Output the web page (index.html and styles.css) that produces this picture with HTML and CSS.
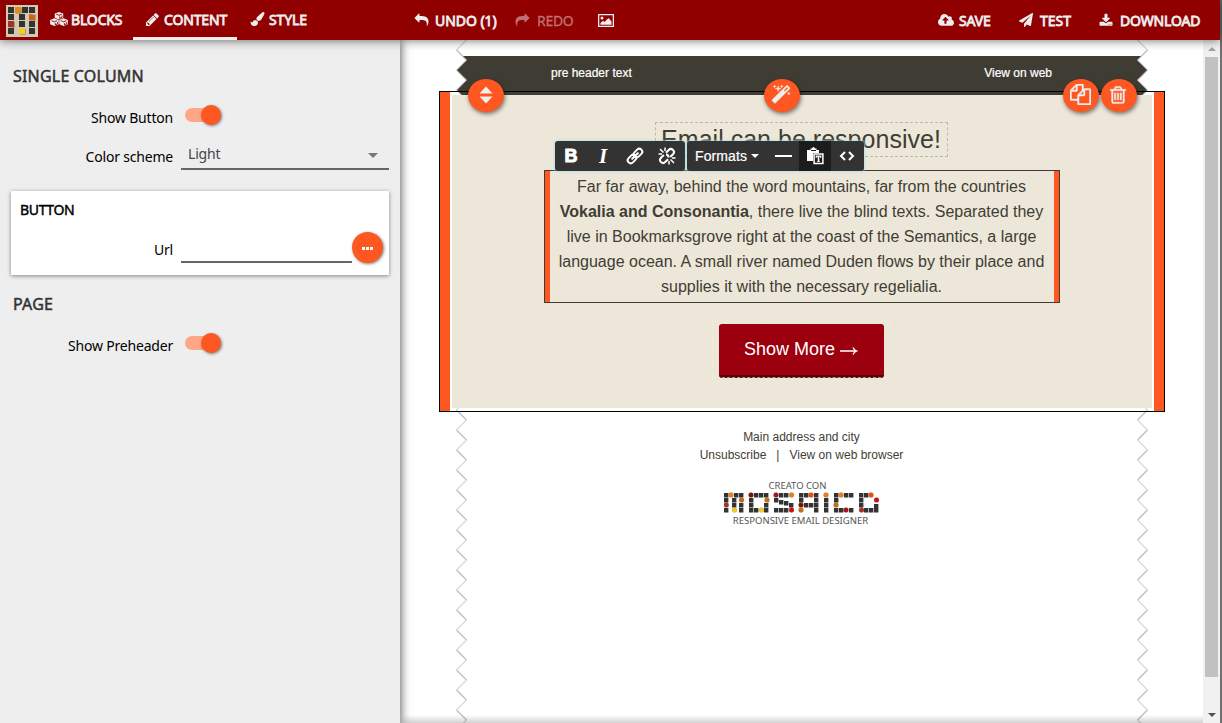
FILE: index.html
```html
<!DOCTYPE html>
<html lang="en">
<head>
<meta charset="utf-8">
<title>Mosaico editor</title>
<link rel="stylesheet" href="styles.css">
</head>
<body>
<div class="app">
  <header class="topbar">
    <svg class="logo" viewBox="0 0 32 32">
      <rect width="32" height="32" fill="#d2c9b0"/>
      <path fill="#333" d="M2 2h6v6H2zM16 2h6v6h-6zM23 2h6v6h-6zM2 9h6v6H2zM13 9h6v6h-6zM13 16h6v6h-6zM23 16h6v6h-6zM2 23h6v6H2zM23 23h6v6h-6z"/>
      <path fill="#a99f86" d="M10 3h6v6h-6zM24 10h6v6h-6zM3 17h6v6H3zM14 24h6v6h-6z"/>
      <path fill="#e08a17" d="M9 2l6 0 0 6-6 0z"/><path fill="#cf6413" d="M23 9l6 1 0 5-6 0z"/>
      <path fill="#a53126" d="M2 16h6v6H2z"/><path fill="#f2cf1f" d="M13 23h6v6h-6z"/>
    </svg>
    <nav class="tabs">
      <a class="tab tab-blocks"><svg class="ic cubes" viewBox="0 0 18 14"><g fill="#eee"><path d="M9 0l4.200 1.500v4.200L9 7.500 4.800 5.700V1.500zM4.400 6.200l4.300 1.700v4.300L4.400 14 .1 12.200V7.900zM13.600 6.200l4.300 1.700v4.300L13.600 14l-4.300-1.800V7.900z"/></g><path d="M6.200 2.200L9 3.300l2.800-1.100M9.700 4.500v1.900l2.300-1V3.600M1.600 8.700l2.800 1.100 2.800-1.100M5.200 11v1.900l2.300-1v-1.800M10.800 8.700l2.800 1.100 2.800-1.100M14.400 11v1.900l2.300-1v-1.800" fill="none" stroke="#900000" stroke-width=".9"/></svg><span>BLOCKS</span></a>
      <a class="tab tab-content active"><svg class="ic" viewBox="128 128 1536 1536"><path d="M491 1536l91-91-235-235-91 91v107h128v128h107zm523-928q0-22-22-22-10 0-17 7l-542 542q-7 7-7 17 0 22 22 22 10 0 17-7l542-542q7-7 7-17zm-54-192l416 416-832 832h-416v-416zm683 96q0 53-37 90l-166 166-416-416 166-165q36-38 90-38 53 0 91 38l235 234q37 39 37 91z"/></svg><span>CONTENT</span></a>
      <a class="tab tab-style"><svg class="ic brush" viewBox="0 0 1792 1792"><path d="M1615 0q70 0 122.500 46.500t52.500 116.500q0 63-45 151-332 629-465 752-97 91-218 91-126 0-216.500-92.500t-90.500-219.500q0-128 92-212l638-579q59-54 130-54zm-909 1034q39 76 106.500 130t150.500 76l1 71q4 213-129.500 347t-348.500 134q-123 0-218-46.500t-152.500-127.500-86.500-183-29-220q7 5 41 30t62 44.500 59 36.500 46 17q41 0 55-37 25-66 57.500-112.500t69.500-76 88-47.500 103-25.500 125-10.500z"/></svg><span>STYLE</span></a>
    </nav>
    <div class="history">
      <a class="act undo"><svg class="ic flip" viewBox="0 0 1792 1792"><path d="M1792 640q0 26-19 45l-512 512q-19 19-45 19t-45-19-19-45v-256h-224q-98 0-175.500 6t-154 21.500-133 42.500-105.500 69.500-80 101-48.500 138.500-17.500 181q0 55 5 123 0 6 2.500 23.500t2.500 26.500q0 15-8.500 25t-23.500 10q-16 0-28-17-7-9-13-22t-13.500-30-10.500-24q-127-285-127-451 0-199 53-333 162-403 875-403h224v-256q0-26 19-45t45-19 45 19l512 512q19 19 19 45z"/></svg><span>UNDO (1)</span></a>
      <a class="act redo"><svg class="ic" viewBox="0 0 1792 1792"><path d="M1792 640q0 26-19 45l-512 512q-19 19-45 19t-45-19-19-45v-256h-224q-98 0-175.500 6t-154 21.500-133 42.500-105.500 69.500-80 101-48.500 138.500-17.500 181q0 55 5 123 0 6 2.500 23.500t2.500 26.500q0 15-8.500 25t-23.500 10q-16 0-28-17-7-9-13-22t-13.500-30-10.500-24q-127-285-127-451 0-199 53-333 162-403 875-403h224v-256q0-26 19-45t45-19 45 19l512 512q19 19 19 45z"/></svg><span>REDO</span></a>
      <a class="act gallery"><svg class="ic pic" viewBox="0 0 16 13"><path fill-rule="evenodd" d="M0 0h16v13H0zM1.300 1.300v10.400h13.400V1.300z"/><circle cx="4" cy="4" r="1.500"/><path d="M2.500 10.800V9l2.500-2.300 1.500 1.300 4-4 3 3.500v3.300z"/></svg></a>
    </div>
    <div class="actions">
      <a class="act save"><svg class="ic cloud" viewBox="-64 128 1920 1536"><path d="M1216 864q0-14-9-23l-352-352q-9-9-23-9t-23 9l-351 351q-10 12-10 24 0 14 9 23t23 9h224v352q0 13 9.500 22.500t22.500 9.500h192q13 0 22.500-9.500t9.500-22.500v-352h224q13 0 22.500-9.500t9.500-22.500zm640 288q0 159-112.500 271.500t-271.500 112.500h-1088q-185 0-316.500-131.500t-131.500-316.500q0-130 70-240t188-165q-2-30-2-43 0-212 150-362t362-150q156 0 285.500 87t188.500 231q71-62 166-62 106 0 181 75t75 181q0 76-41 138 130 31 213.500 135.500t83.500 238.500z"/></svg><span>SAVE</span></a>
      <a class="act test"><svg class="ic" viewBox="0 0 1792 1792"><path d="M1764 11q33 24 27 64l-256 1536q-5 29-32 45-14 8-31 8-11 0-24-5l-453-185-242 295q-18 23-49 23-13 0-22-4-19-7-30.500-23.500t-11.500-36.500v-349l864-1059-1069 925-395-162q-37-14-40-55-2-40 32-59l1664-960q15-9 32-9 20 0 36 11z"/></svg><span>TEST</span></a>
      <a class="act download"><svg class="ic" viewBox="0 0 1792 1600"><path d="M1344 1344q0-26-19-45t-45-19-45 19-19 45 19 45 45 19 45-19 19-45zm256 0q0-26-19-45t-45-19-45 19-19 45 19 45 45 19 45-19 19-45zm128-224v320q0 40-28 68t-68 28h-1472q-40 0-68-28t-28-68v-320q0-40 28-68t68-28h465l135 136q58 56 136 56t136-56l136-136h464q40 0 68 28t28 68zm-325-569q17 41-14 70l-448 448q-18 19-45 19t-45-19l-448-448q-31-29-14-70 17-39 59-39h256v-448q0-26 19-45t45-19h256q26 0 45 19t19 45v448h256q42 0 59 39z"/></svg><span>DOWNLOAD</span></a>
    </div>
  </header>

  <div class="workspace">
    <aside class="sidebar">
      <h2 class="section">SINGLE COLUMN</h2>
      <div class="row row-toggle"><label class="label">Show Button</label><i class="toggle"></i></div>
      <div class="row row-select"><label class="label">Color scheme</label><div class="select"><span>Light</span><i class="caret"></i></div></div>
      <section class="card">
        <h3 class="card-title">BUTTON</h3>
        <div class="row row-url"><label class="label">Url</label><div class="input"></div><button class="more"><i></i><i></i><i></i></button></div>
      </section>
      <h2 class="section">PAGE</h2>
      <div class="row row-toggle"><label class="label">Show Preheader</label><i class="toggle"></i></div>
    </aside>

    <main class="stage">
      <svg class="zigzag" viewBox="0 0 692 683">
        <defs>
          <pattern id="zl" width="12" height="20" patternUnits="userSpaceOnUse" patternTransform="translate(0 10)"><path d="M.5 0L10.500 10" stroke="#c2c2c2" stroke-width="1.500"/><path d="M10.500 10L.5 20" stroke="#d8d8d8" stroke-width="1.200"/></pattern>
          <pattern id="zr" width="12" height="20" patternUnits="userSpaceOnUse" patternTransform="translate(680 10)"><path d="M11.500 0L1.500 10" stroke="#c2c2c2" stroke-width="1.500"/><path d="M1.500 10L11.500 20" stroke="#d8d8d8" stroke-width="1.200"/></pattern>
        </defs>
        <rect width="12" height="683" fill="url(#zl)"/>
        <rect x="680" width="12" height="683" fill="url(#zr)"/>
      </svg>
      <div class="preheader"><span>pre header text</span><span>View on web</span></div>
      <section class="module">
        <div class="block">
          <h1 class="headline">Email can be responsive!</h1>
          <div class="copy">Far far away, behind the word mountains, far from the countries<br><b>Vokalia and Consonantia</b>, there live the blind texts. Separated they<br>live in Bookmarksgrove right at the coast of the Semantics, a large<br>language ocean. A small river named Duden flows by their place and<br>supplies it with the necessary regelialia.</div>
          <div class="cta-wrap"><a class="cta">Show More <svg class="arrow" viewBox="0 0 18 10"><path d="M0 5h16.500M13 1.500q1 2.700 3.800 3.500-2.800.800-3.800 3.500" fill="none" stroke="#fff" stroke-width="1.300"/></svg></a></div>
        </div>
        <button class="fab fab-move"><svg viewBox="0 0 14 18"><path d="M7 .5l6.500 7H.5zM7 17.500l6.500-7H.5z"/></svg></button>
        <button class="fab fab-magic"><svg viewBox="0 0 1792 1792"><path d="M1254 581l293-293-107-107-293 293zm447-293q0 27-18 45l-1286 1286q-18 18-45 18t-45-18l-198-198q-18-18-18-45t18-45l1286-1286q18-18 45-18t45 18l198 198q18 18 18 45zm-1351-190l98 30-98 30-30 98-30-98-98-30 98-30 30-98zm350 162l196 60-196 60-60 196-60-196-196-60 196-60 60-196zm930 478l98 30-98 30-30 98-30-98-98-30 98-30 30-98zm-640-640l98 30-98 30-30 98-30-98-98-30 98-30 30-98z"/></svg></button>
        <button class="fab fab-copy"><svg viewBox="0 0 1792 1792"><path d="M1696 384q40 0 68 28t28 68v1216q0 40-28 68t-68 28h-960q-40 0-68-28t-28-68v-288h-544q-40 0-68-28t-28-68v-672q0-40 20-88t48-76l408-408q28-28 76-48t88-20h416q40 0 68 28t28 68v328q68-40 128-40h416zm-544 213l-299 299h299v-299zm-640-384l-299 299h299v-299zm196 647l316-316v-416h-384v416q0 40-28 68t-68 28h-416v640h512v-256q0-40 20-88t48-76zm956 804v-1152h-384v416q0 40-28 68t-68 28h-416v640h896z"/></svg></button>
        <button class="fab fab-trash"><svg viewBox="0 0 1792 1792"><path d="M704 736v576q0 14-9 23t-23 9h-64q-14 0-23-9t-9-23v-576q0-14 9-23t23-9h64q14 0 23 9t9 23zm256 0v576q0 14-9 23t-23 9h-64q-14 0-23-9t-9-23v-576q0-14 9-23t23-9h64q14 0 23 9t9 23zm256 0v576q0 14-9 23t-23 9h-64q-14 0-23-9t-9-23v-576q0-14 9-23t23-9h64q14 0 23 9t9 23zm128 724v-948h-896v948q0 22 7 40.500t14.500 27 10.500 8.500h832q3 0 10.500-8.500t14.500-27 7-40.500zm-672-1076h448l-48-117q-7-9-17-11h-317q-10 2-17 11zm928 32v64q0 14-9 23t-23 9h-96v948q0 83-47 143.500t-113 60.500h-832q-66 0-113-58.500t-47-141.500v-952h-96q-14 0-23-9t-9-23v-64q0-14 9-23t23-9h309l70-167q15-37 54-63t79-26h320q40 0 79 26t54 63l70 167h309q14 0 23 9t9 23z"/></svg></button>
        <div class="toolbar">
          <div class="group">
            <span class="tool bold">B</span><span class="tool italic">I</span>
            <span class="tool"><svg viewBox="0 0 18 18"><g fill="none" stroke="#fff" stroke-width="2" transform="rotate(-45 9 9)"><rect x="0" y="6" width="9.500" height="6" rx="3"/><rect x="8.500" y="6" width="9.500" height="6" rx="3"/><path d="M5 9h8" stroke-linecap="round"/></g></svg></span>
            <span class="tool"><svg viewBox="0 0 18 18"><g fill="none" stroke="#fff" stroke-width="2"><g transform="rotate(-45 9 9)"><path d="M7.500 6H3.500a3 3 0 0 0 0 6h4M10.500 6h4a3 3 0 0 1 0 6h-4"/></g><path stroke-width="1.500" d="M2 2l3.500 3.500M7 .500v3.500M.500 7h3.500M12.500 12.500L16 16M11 14v3.500M14 11h3.500"/><path d="M8 7.500q2.500 0 2.500 3"/></g></svg></span>
          </div>
          <div class="group">
            <span class="formats">Formats<i></i></span>
            <span class="tool"><i class="dash"></i></span>
            <span class="tool pressed"><svg viewBox="0 0 18 18"><path fill="#fff" fill-rule="evenodd" d="M1 3h3.500V1.500h1.500Q6.500 0 7.500 0T9 1.500h1.500V3H13v3H7v8H1zM5 3v1h5V3z"/><path fill="none" stroke="#fff" stroke-width="1.500" d="M8.100 7.100h8.800v9.300H8.100z"/><path fill="#fff" d="M9.700 8.500h5.600V11h-.8l-.4-1.200h-.8v4.400l.8.300v.6h-3.200v-.6l.8-.3V9.800h-.8L10.500 11h-.8z"/></svg></span>
            <span class="tool"><svg viewBox="0 0 18 18"><path d="M7 5L3 9l4 4M11 5l4 4-4 4" fill="none" stroke="#fff" stroke-width="2"/></svg></span>
          </div>
        </div>
      </section>
      <footer class="mail-footer">
        <p>Main address and city</p>
        <p class="links"><span>Unsubscribe</span><span>|</span><span>View on web browser</span></p>
        <div class="brand">
          <span class="brand-top">CREATO CON</span>
          <svg class="mosaic" viewBox="0 0 156 22">
            <path fill="#333" d="M0 1h4.400v4.400H0zM10 1h4.400v4.400H10zM15 1h4.400v4.400H15zM0 6h4.400v4.400H0zM8 6h4.400v4.400H8zM8 11h4.400v4.400H8zM15 11h4.400v4.400H15zM0 16h4.400v4.400H0zM15 16h4.400v4.400H15z
            M30 1h4.400v4.400H30zM35 1h4.400v4.400H35zM40 1h4.400v4.400H40zM25 6h4.400v4.400H25zM25 11h4.400v4.400H25zM40 11h4.400v4.400H40zM25 16h4.400v4.400H25zM40 16h4.400v4.400H40zM30 16h4.400v4.400H30z
            M55 1h4.400v4.400H55zM60 1h4.400v4.400H60zM50 6h4.400v4.400H50zM55 8h4.400v4.400H55zM60 9h4.400v4.400H60zM65 11h4.400v4.400H65zM50 16h4.400v4.400H50zM55 16h4.400v4.400H55zM60 16h4.400v4.400H60z
            M75 1h4.400v4.400H75zM80 1h4.400v4.400H80zM90 1h4.400v4.400H90zM75 6h4.400v4.400H75zM90 6h4.400v4.400H90zM80 11h4.400v4.400H80zM85 11h4.400v4.400H85zM90 11h4.400v4.400H90zM90 16h4.400v4.400H90z
            M100 6h4.400v4.400H100zM100 11h4.400v4.400H100zM100 16h4.400v4.400H100z
            M110 1h4.400v4.400H110zM120 1h4.400v4.400H120zM125 1h4.400v4.400H125zM110 6h4.400v4.400H110zM110 16h4.400v4.400H110zM115 16h4.400v4.400H115zM125 16h4.400v4.400H125z
            M135 1h4.400v4.400H135zM140 1h4.400v4.400H140zM135 6h4.400v4.400H135zM135 11h4.400v4.400H135zM150 12h4.400v4.400H150zM140 16h4.400v4.400H140zM145 16h4.400v4.400H145zM150 16h4.400v4.400H150z"/>
            <g stroke="#777" stroke-opacity=".35" stroke-width=".6"><circle cx="7" cy="3" r="2.500" fill="#df8518"/><circle cx="17.500" cy="8" r="2.500" fill="#cf6413"/><circle cx="2.300" cy="13" r="2.500" fill="#a53126"/><circle cx="10.500" cy="18" r="2.500" fill="#f2cf1f"/><circle cx="27" cy="3" r="2.500" fill="#7a1005"/><circle cx="43" cy="8" r="2.500" fill="#c17312"/><circle cx="37.500" cy="18" r="2.500" fill="#f2cf1f"/><circle cx="52" cy="3" r="2.500" fill="#a41020"/><circle cx="67.500" cy="3" r="2.500" fill="#df8518"/><circle cx="67.500" cy="18" r="2.500" fill="#d40e08"/><circle cx="87" cy="3" r="2.500" fill="#f24a0a"/><circle cx="77" cy="13" r="2.500" fill="#7a1005"/><circle cx="77" cy="18" r="2.500" fill="#c17312"/><circle cx="102" cy="3" r="2.500" fill="#df8518"/><circle cx="117" cy="3" r="2.500" fill="#df8518"/><circle cx="112" cy="13" r="2.500" fill="#c17312"/><circle cx="122" cy="18" r="2.500" fill="#a41020"/><circle cx="147" cy="3" r="2.500" fill="#f24a0a"/><circle cx="152.500" cy="8" r="2.500" fill="#d40e08"/><circle cx="137.500" cy="18" r="2.500" fill="#a53126"/></g>
          </svg>
          <span class="brand-bottom">RESPONSIVE EMAIL DESIGNER</span>
        </div>
      </footer>
    </main>
    <div class="scrollbar"><i class="up"></i><div class="thumb"></div><i class="down"></i></div>
  </div>
</div>
</body>
</html>
```

FILE: styles.css
```css
* { box-sizing: border-box; }
body { margin: 0; overflow: hidden; font-family: "Noto Sans", sans-serif; font-size: 14px; color: #000; }
h1, h2, h3, p { margin: 0; font-weight: 400; }
button { border: 0; padding: 0; }
.app { width: 1222px; height: 723px; display: flex; flex-direction: column; background: #fff; border-right: 2px solid #707070; }

/* top bar */
.topbar { position: relative; z-index: 5; flex: 0 0 40px; display: flex; background: #900000; color: #eee; box-shadow: 0 0 10px rgba(0,0,0,.6); }
.logo { width: 32px; height: 32px; margin: 5px 0 0 6px; }
.tabs, .history, .actions { display: flex; }
.tabs { width: 362px; }
.tab, .act { display: flex; align-items: center; white-space: nowrap; -webkit-text-stroke: .8px #eee; }
.tab { height: 40px; border-bottom: 3px solid transparent; padding-top: 1px; }
.tab-blocks { width: 95px; padding-left: 12px; letter-spacing: -.15px; }
.tab-content { width: 104px; padding-left: 13px; letter-spacing: -.15px; }
.tab-style { padding-left: 13px; letter-spacing: -.1px; }
.tab.active { border-bottom-color: #eee; }
.ic { width: 14px; height: 14px; fill: currentColor; stroke: none; flex: none; }
.tab .ic { margin-right: 4px; }
.tab .cubes { width: 18px; margin-right: 3px; }
.tab-content .ic { width: 13px; height: 13px; margin-right: 5px; }
.tab .brush { width: 15px; }
.flip { transform: scaleX(-1); }
.history { width: 538px; padding-left: 14px; }
.act .ic { margin-right: 7px; }
.act .flip { width: 15px; margin-right: 6px; }
.undo { width: 101px; letter-spacing: -.05px; }
.redo { width: 83px; color: #c07070; -webkit-text-stroke-width: .3px; -webkit-text-stroke-color: #c07070; letter-spacing: -.3px; }
.redo .ic { width: 15px; margin-right: 7px; }
.act .pic { width: 16px; height: 13px; margin-top: 1px; }
.act .cloud { width: 16px; height: 13px; margin-right: 5px; }
.save { width: 81px; letter-spacing: -.15px; }
.test { width: 80px; }
.download { letter-spacing: -.15px; }
.download .ic { margin-right: 7px; }

/* settings panel */
.workspace { flex: 1; display: flex; min-height: 0; }
.sidebar { position: relative; z-index: 3; width: 400px; background: #eee; box-shadow: 0 0 10px rgba(0,0,0,.75); padding: 24px 11px 0; }
.section { font-size: 16px; line-height: 24px; color: #333; letter-spacing: .2px; -webkit-text-stroke: .5px #333; padding-left: 2px; }
.row { display: flex; align-items: flex-start; }
.label { width: 162px; text-align: right; line-height: 20px; letter-spacing: -.2px; }
.row-toggle { height: 39px; margin-top: 16px; }
.row-toggle .label { padding-top: 4px; }
.toggle { position: relative; width: 34px; height: 14px; border-radius: 7px; background: #ffa588; margin: 4px 0 0 12px; }
.toggle::after { content: ""; position: absolute; right: -2px; top: -3px; width: 20px; height: 20px; border-radius: 50%; background: #ff5722; box-shadow: 1px 1px 3px rgba(0,0,0,.5); }
.row-select .label { padding-top: 4px; }
.select { width: 208px; height: 27px; margin-left: 8px; border-bottom: 2px solid #666; display: flex; justify-content: space-between; padding: 0 11px 0 7px; color: #444; line-height: 22px; letter-spacing: -.2px; }
.caret { margin-top: 10px; width: 0; height: 0; border: 5px solid transparent; border-top: 5px solid #777; border-bottom: 0; }
.card { height: 84px; margin: 21px 0 17px; background: #fff; box-shadow: 0 1px 4px rgba(0,0,0,.45); padding: 9px 0 0 9px; }
.card-title { font-size: 14px; line-height: 20px; letter-spacing: -.35px; -webkit-text-stroke: .45px #000; }
.row-url { margin-top: 12px; }
.row-url .label { width: 153px; padding-top: 8px; }
.input { width: 171px; height: 31px; margin-left: 8px; border-bottom: 2px solid #666; }
.more { width: 31px; height: 31px; border-radius: 50%; background: #ff5722; box-shadow: 1px 1px 3px rgba(0,0,0,.5); display: flex; gap: 1px; align-items: center; justify-content: center; padding: 2px 1px 0 0; }
.more i { width: 3px; height: 3px; background: #fff; }

/* mail canvas */
.stage { position: relative; width: 803px; padding-top: 16px; font-family: "Liberation Sans", Arial, sans-serif; }
.stage::after { content: ""; position: absolute; left: 0; right: 0; bottom: 0; height: 8px; background: linear-gradient(transparent, rgba(0,0,0,.18)); }
.zigzag { position: absolute; left: 56px; top: 0; width: 692px; height: 683px; }
.preheader { position: relative; width: 692px; height: 39px; margin: 0 0 0 56px; padding: 0 96px 0 95px; background: #3f3d33; color: #fff; font-size: 12px; line-height: 34px; -webkit-text-stroke: .2px #fff; display: flex; justify-content: space-between;
  clip-path: polygon(7px 0, 11px 4px, 1px 14px, 11px 24px, 1px 34px, 6px 39px, 686px 39px, 691px 34px, 681px 24px, 691px 14px, 681px 4px, 685px 0); }
.module { position: relative; width: 726px; height: 321px; margin: -4px 0 0 39px; border: 1px solid #000; }
.module::before, .module::after { content: ""; position: absolute; top: 0; bottom: 0; width: 10px; background: #ff5722; }
.module::before { left: 0; }
.module::after { right: 0; }
.block { height: 313px; margin: 3px 12px 0; background: #ede7da; box-shadow: -2px 0 #fff, 2px 0 #fff; padding-top: 27px; display: flex; flex-direction: column; align-items: center; color: #3f3d33; }
.headline { width: 293px; height: 35px; margin-right: 2px; border: 1px dashed #bcb8a6; font-size: 25px; line-height: 33px; text-align: center; white-space: nowrap; letter-spacing: .02px; }
.copy { width: 516px; height: 133px; margin-top: 13px; border: 1px solid #3f3d33; box-shadow: inset 5px 0 #ff5722, inset -5px 0 #ff5722; padding: 3px 1px 0 0; font-size: 16px; line-height: 25px; text-align: center; white-space: nowrap; }
.cta-wrap { position: relative; width: 179px; height: 58px; margin: 18px 2px 0 0; padding: 3px 7px 0; }
.cta-wrap::after { content: ""; position: absolute; inset: 0 0 1px; border: 1px dashed rgba(235,245,225,.6); }
.cta { display: flex; width: 165px; height: 54px; border-radius: 3px; background: #9c000f; border-bottom: 3px solid #5c0009; color: #fff; font-size: 18px; align-items: center; justify-content: center; gap: 5px; }
.arrow { width: 18px; height: 10px; margin-top: 3px; }
.fab { position: absolute; top: -13px; width: 36px; height: 33px; border-radius: 50%; background: #ff5722; box-shadow: 1px 2px 4px rgba(0,0,0,.5); display: flex; align-items: center; justify-content: center; padding: 0 2px 2px 0; }
.fab svg { width: 20px; height: 20px; fill: #eee; stroke: #eee; stroke-width: 40px; flex: none; }
.fab-move { left: 28px; padding-right: 1px; padding-bottom: 1px; }
.fab-move svg { width: 14px; height: 18px; stroke: none; }
.fab-magic { left: 324px; }
.fab-copy { left: 623px; }
.fab-copy svg { width: 21px; height: 21px; }
.fab-trash { left: 661px; }
.toolbar { position: absolute; left: 115px; top: 49px; display: flex; gap: 2px; color: #fff; }
.group { display: flex; height: 30px; background: #333; border-radius: 3px; box-shadow: 0 0 2px 1px rgba(150,225,240,.6); }
.group:first-child { width: 130px; }
.group:last-child { width: 177px; }
.tool { width: 32px; display: flex; align-items: center; justify-content: center; }
.tool svg { width: 18px; height: 18px; }
.bold { font-weight: 700; font-size: 18px; -webkit-text-stroke: 1px #fff; }
.italic { font: italic bold 21px "Liberation Serif", serif; }
.formats { width: 80px; padding-left: 8px; font-size: 14px; line-height: 30px; letter-spacing: .1px; -webkit-text-stroke: .2px #fff; display: flex; align-items: center; gap: 4px; }
.formats i { border: 4px solid transparent; border-top-color: #fff; border-bottom: 0; }
.dash { width: 17px; height: 2px; background: #fff; }
.pressed { background: #1c1c1c; }
.mail-footer { display: flex; flex-direction: column; align-items: center; padding: 16px 0 0; font-size: 12px; line-height: 18px; color: #3f3d33; }
.links { display: flex; gap: 10px; }
.brand { display: flex; flex-direction: column; align-items: center; margin-top: 15px; font-family: "Noto Sans", sans-serif; font-size: 9.500px; line-height: 13px; color: #555; white-space: nowrap; }
.brand-top { margin-right: 8px; }
.mosaic { width: 156px; height: 22px; }
.brand-bottom { margin-right: 2px; }

/* scrollbar */
.scrollbar { width: 17px; background: #f1f1f1; display: flex; flex-direction: column; align-items: center; padding: 7px 0 6px; }
.scrollbar i { border: 4px solid transparent; }
.up { border-top: 0 !important; border-bottom-color: #a3a3a3 !important; }
.down { margin-top: auto; border-bottom: 0 !important; border-top-color: #505050 !important; }
.thumb { width: 13px; height: 620px; margin-top: 6px; background: #c1c1c1; }
```
